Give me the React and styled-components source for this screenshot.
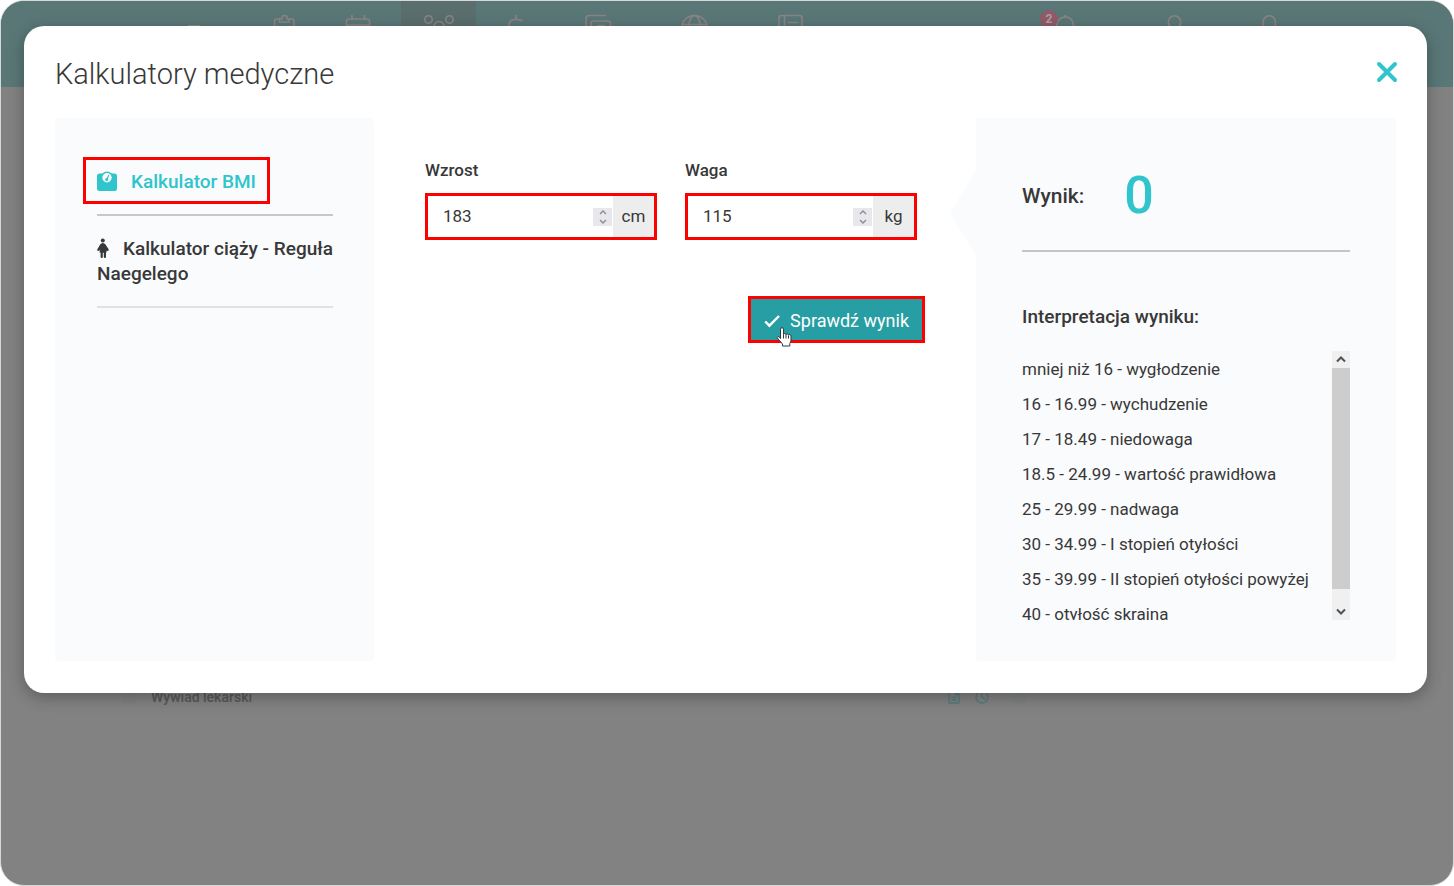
import React, { useState } from 'react'
import styled, { createGlobalStyle } from 'styled-components'

const navItems = [
  {
    name: 'Pacjenci',
    width: 62,
    icon: (
      <>
        <path d='M9 5H6.500Q4.500 5 4.500 7.500V28M19 5h3q2 0 2 2.500V28' />
        <path d='M9.500 3.800V8h9.500V5h-2V4a2.500 2.500 0 0 0-5 0v1H9.500z' />
      </>
    ),
  },
  {
    name: 'Terminarz',
    width: 86,
    icon: (
      <>
        <path d='M2.500 28V7.500q0-2.500 2.500-2.500h18q2.500 0 2.500 2.500v20' />
        <path d='M2.500 11h23M8 1.500v3.500M20.500 1.500v3.500' />
      </>
    ),
  },
  {
    name: 'Grupy',
    width: 75,
    active: true,
    icon: (
      <>
        <circle cx='3.500' cy='5.500' r='3.700' />
        <circle cx='24.500' cy='5.500' r='3.700' />
        <circle cx='14' cy='12.500' r='5' />
      </>
    ),
  },
  {
    name: 'Rozliczenia',
    width: 80,
    icon: <path d='M14 1.500v3.500M20 6.500q-6-2-10-.500-3 1.500-3 5v4' />,
  },
  {
    name: 'Dokumenty',
    width: 84,
    icon: (
      <>
        <path d='M2 24V5q0-3.500 3.500-3.500h16' />
        <path d='M7 28V9.500q0-2.500 2.500-2.500h14.500q2.500 0 2.500 2.500V28' />
        <path d='M14 11.500h6' />
      </>
    ),
  },
  {
    name: 'Portal',
    width: 108,
    icon: (
      <>
        <circle cx='14.500' cy='14.500' r='13' />
        <ellipse cx='14.500' cy='14.500' rx='6' ry='13' />
        <path d='M3 10.500h23' />
      </>
    ),
  },
  {
    name: 'Raporty',
    width: 84,
    icon: (
      <>
        <path d='M3 28V4q0-2.500 2.500-2.500h18q2.500 0 2.500 2.500v24M8.500 2v26' />
        <path d='M12.500 8.500h9' />
      </>
    ),
  },
]

const userItems = [
  {
    name: 'Powiadomienia',
    width: 120,
    badge: 2,
    icon: <path d='M6.500 14V11.500q1-8 8.500-8.500t8.500 8.500v2.500M15 1.500v1.500' />,
  },
  {
    name: 'Konto',
    width: 100,
    icon: <circle cx='14.500' cy='8' r='6.200' />,
  },
  {
    name: 'Wyloguj',
    width: 90,
    icon: <path d='M8 11.500V8a6.200 6.200 0 0 1 12.400 0V11.500' />,
  },
]

const results = [
  'mniej niż 16 - wygłodzenie',
  '16 - 16.99 - wychudzenie',
  '17 - 18.49 - niedowaga',
  '18.5 - 24.99 - wartość prawidłowa',
  '25 - 29.99 - nadwaga',
  '30 - 34.99 - I stopień otyłości',
  '35 - 39.99 - II stopień otyłości powyżej',
  '40 - otyłość skrajna',
]

const NavEntry = ({ item }) => (
  <NavItem href='#' aria-label={item.name} $width={item.width} $active={item.active}>
    <NavIcon viewBox='0 0 28 28'>{item.icon}</NavIcon>
    {item.badge && <Badge>{item.badge}</Badge>}
  </NavItem>
)

const NumberField = ({ id, label, unit, value, onChange }) => (
  <Field>
    <FieldLabel htmlFor={id}>{label}</FieldLabel>
    <InputGroup>
      <NumberInput id={id} type='number' value={value} onChange={(e) => onChange(e.target.value)} />
      <Stepper>
        <StepButton type='button' aria-label={`${label} +`} onClick={() => onChange(Number(value) + 1)}>
          <StepIcon viewBox='0 0 8 5'>
            <path d='M1 4l3-3 3 3' />
          </StepIcon>
        </StepButton>
        <StepButton type='button' aria-label={`${label} -`} onClick={() => onChange(Number(value) - 1)}>
          <StepIcon viewBox='0 0 8 5'>
            <path d='M1 1l3 3 3-3' />
          </StepIcon>
        </StepButton>
      </Stepper>
      <Unit>{unit}</Unit>
    </InputGroup>
  </Field>
)

const App = () => {
  const [height, setHeight] = useState(183)
  const [weight, setWeight] = useState(115)

  return (
    <Page>
      <GlobalStyle />
      <Shell>
        <Navbar>
          <Logo viewBox='0 0 14 14'>
            <path d='M1 1.500h12' />
          </Logo>
          {navItems.map((item) => (
            <NavEntry key={item.name} item={item} />
          ))}
          <Spacer />
          {userItems.map((item) => (
            <NavEntry key={item.name} item={item} />
          ))}
        </Navbar>
        <Record>
          <Tile />
          <RecordTitle>Wywiad lekarski</RecordTitle>
          <RecordActions>
            <RecordIcon viewBox='0 0 14 14'>
              <path d='M2 1h6.500L12 4.500V13H2zM8.500 1v3.500H12M4.500 7.500h5M4.500 10h5' />
            </RecordIcon>
            <RecordIcon viewBox='0 0 14 14'>
              <circle cx='7' cy='7' r='6' />
              <path d='M7 3v4l3 2.500' />
            </RecordIcon>
          </RecordActions>
          <Tile />
        </Record>
        <Overlay>
          <Modal role='dialog' aria-labelledby='modal-title'>
            <ModalHeader>
              <ModalTitle id='modal-title'>Kalkulatory medyczne</ModalTitle>
              <CloseButton type='button' aria-label='Zamknij'>
                <CloseIcon viewBox='0 0 22 22'>
                  <path d='M3 3l16 16M19 3L3 19' />
                </CloseIcon>
              </CloseButton>
            </ModalHeader>
            <Columns>
              <Sidebar>
                <MenuRow>
                  <MenuLink href='#' $active>
                    <MenuIcon width='20' height='20' viewBox='0 0 20 20'>
                      <rect y='2.500' width='20' height='17.500' rx='2.500' />
                      <circle cx='10' cy='7' r='6.500' />
                      <circle cx='10' cy='6.800' r='4.700' fill='#fafbfd' />
                      <circle cx='9.600' cy='8.600' r='1.500' />
                      <path d='M9.200 8.500l2.100-4.800 1 .4-1.600 5z' />
                    </MenuIcon>
                    Kalkulator BMI
                  </MenuLink>
                </MenuRow>
                <MenuRow>
                  <MenuLink href='#'>
                    <MenuIcon width='12' height='20' viewBox='0 0 12 20'>
                      <circle cx='5.800' cy='2.500' r='2' />
                      <path d='M5.800 5q1.900 0 2.700 1.500l2.800 4.200q.8 1.300 0 2-1 .7-1.800-.2V14.500H9V19q0 .9-1.100.9T6.800 19v-4.300h-1V19q0 .9-1.100.9T3.600 19v-4.500H2.500l.4-3-.7 1.100q-.7.8-1.500.2-.9-.6-.3-1.600L3.100 6.500Q4 5 5.800 5z' />
                    </MenuIcon>
                    Kalkulator ciąży - Reguła Naegelego
                  </MenuLink>
                </MenuRow>
              </Sidebar>
              <Form onSubmit={(e) => e.preventDefault()}>
                <Fields>
                  <NumberField id='height' label='Wzrost' unit='cm' value={height} onChange={setHeight} />
                  <NumberField id='weight' label='Waga' unit='kg' value={weight} onChange={setWeight} />
                </Fields>
                <SubmitButton type='submit'>
                  <CheckIcon viewBox='0 0 16 14'>
                    <path d='M1.200 7.500l4.200 4.200L15 2' />
                  </CheckIcon>
                  Sprawdź wynik
                  <Pointer viewBox='0 0 18 22'>
                    <path d='M5.500 12.500V3.200a1.500 1.500 0 0 1 3 0V8.500q0-1 1.200-1t1.300 1.200q.2-.8 1.300-.8t1.200 1.300q.2-.7 1.200-.7t1.300 1.500V14q0 2-1.200 3.500V20H7.500v-2L3 13q-1.500-2 0-2.500 1-.300 2.500 2z' />
                    <path d='M8.500 8.500v4M11 9v3.500M13.500 9.500v3' />
                  </Pointer>
                </SubmitButton>
              </Form>
              <ResultPanel>
                <ResultRow>
                  <ResultLabel>Wynik:</ResultLabel>
                  <ResultValue>0</ResultValue>
                </ResultRow>
                <SubTitle>Interpretacja wyniku:</SubTitle>
                <ScrollArea>
                  <ResultList>
                    {results.map((text) => (
                      <ResultItem key={text}>{text}</ResultItem>
                    ))}
                  </ResultList>
                  <Scrollbar aria-hidden='true'>
                    <ScrollArrow viewBox='0 0 10 7'>
                      <path d='M1 5.500l4-4 4 4' />
                    </ScrollArrow>
                    <Thumb />
                    <ScrollArrow viewBox='0 0 10 7'>
                      <path d='M1 1.500l4 4 4-4' />
                    </ScrollArrow>
                  </Scrollbar>
                </ScrollArea>
              </ResultPanel>
            </Columns>
          </Modal>
        </Overlay>
      </Shell>
    </Page>
  )
}

const GlobalStyle = createGlobalStyle`
  * {
    box-sizing: border-box;
  }
  body {
    margin: 0;
    background: #ffffff;
    color: #383838;
    font-family: Roboto, 'Liberation Sans', sans-serif;
    font-size: 16px;
  }
`
const Page = styled.div`
  display: flex;
  min-height: 100vh;
`
const Shell = styled.div`
  position: relative;
  flex: 1;
  overflow: hidden;
  border: 1px solid #d5d9d9;
  border-radius: 24px;
  background: #828282;
`
const Navbar = styled.nav`
  display: flex;
  height: 86px;
  padding: 0 139px 0 186px;
  background: #5a7777;
`
const Logo = styled.svg`
  width: 14px;
  height: 14px;
  margin: 23px 52px 0 0;
  fill: none;
  stroke: #8d8a8a;
  stroke-width: 1;
`
const Spacer = styled.div`
  flex: 1;
`
const NavItem = styled.a`
  position: relative;
  display: flex;
  justify-content: center;
  width: ${({ $width }) => $width}px;
  padding-top: 13px;
  background: ${({ $active }) => ($active ? '#5a6e6e' : 'transparent')};
`
const NavIcon = styled.svg`
  width: 28px;
  height: 28px;
  overflow: visible;
  fill: none;
  stroke: #8b8484;
  stroke-width: 1.6;
  stroke-linecap: round;
`
const Badge = styled.span`
  position: absolute;
  top: 9px;
  left: 36px;
  width: 18px;
  border-radius: 9px;
  background: #925a6a;
  color: #aaa0a2;
  font-size: 12px;
  font-weight: 700;
  line-height: 18px;
  text-align: center;
`
const Record = styled.div`
  display: flex;
  align-items: center;
  gap: 16px;
  margin-top: 600px;
  padding: 0 427px 0 121px;
`
const Tile = styled.span`
  width: 13px;
  height: 18px;
  background: #7f8080;
`
const RecordTitle = styled.span`
  flex: 1;
  color: #585858;
  font-size: 14px;
  font-weight: 500;
  line-height: 20px;
`
const RecordActions = styled.div`
  display: flex;
  gap: 14px;
  margin-right: 8px;
`
const RecordIcon = styled.svg`
  width: 14px;
  height: 14px;
  fill: none;
  stroke: #557b7d;
  stroke-width: 1.3;
`
const Overlay = styled.div`
  position: absolute;
  inset: 0;
  padding: 25px 26px 0 23px;
`
const Modal = styled.section`
  padding: 0 31px 32px;
  border-radius: 20px;
  background: #ffffff;
  box-shadow: 0 4px 16px rgba(0, 0, 0, 0.3);
`
const ModalHeader = styled.header`
  display: flex;
  align-items: center;
  justify-content: space-between;
  height: 92px;
`
const ModalTitle = styled.h1`
  margin: 0;
  padding-top: 4px;
  font-size: 29px;
  font-weight: 300;
  line-height: 40px;
`
const CloseButton = styled.button`
  display: flex;
  margin-right: -2px;
  padding: 0;
  border: 0;
  background: none;
  cursor: pointer;
`
const CloseIcon = styled.svg`
  width: 22px;
  height: 22px;
  fill: none;
  stroke: #30c5cc;
  stroke-width: 4;
  stroke-linecap: round;
`
const Columns = styled.div`
  display: grid;
  grid-template-columns: 319px minmax(0, 1fr) 420px;
  min-height: 543px;
`
const Sidebar = styled.ul`
  margin: 0;
  padding: 39px 41px 39px 42px;
  border-radius: 4px;
  background: #fafbfd;
  list-style: none;
`
const MenuRow = styled.li`
  padding-bottom: 10px;
  border-bottom: 2px solid #c6c8ca;
  & + & {
    padding: 20px 0;
    border-color: #dfe1e3;
  }
`
const MenuLink = styled.a`
  display: inline-block;
  margin: ${({ $active }) => ($active ? '0 -14px' : '0')};
  padding: ${({ $active }) => ($active ? '9px 11px 7px' : '0')};
  border: ${({ $active }) => ($active ? '3px solid #ff0000' : '0')};
  color: ${({ $active }) => ($active ? '#30c5cc' : '#383838')};
  font-size: 19px;
  font-weight: 500;
  line-height: 25px;
  text-decoration: none;
`
const MenuIcon = styled.svg`
  margin-right: 14px;
  fill: currentColor;
  vertical-align: -3px;
`
const Form = styled.form`
  display: flex;
  flex-direction: column;
  padding: 40px 51px;
`
const Fields = styled.div`
  display: flex;
  gap: 28px;
  padding-right: 8px;
`
const Field = styled.div`
  flex: 1;
  min-width: 0;
`
const FieldLabel = styled.label`
  display: block;
  margin-bottom: 11px;
  font-size: 17px;
  font-weight: 500;
  line-height: 24px;
`
const InputGroup = styled.div`
  display: flex;
  align-items: center;
  height: 47px;
  border: 3px solid #ff0000;
`
const NumberInput = styled.input`
  flex: 1;
  min-width: 0;
  height: 41px;
  padding: 0 0 2px 15px;
  border: 0;
  outline: 0;
  background: none;
  color: #383838;
  font-family: inherit;
  font-size: 17px;
  appearance: textfield;
  &::-webkit-inner-spin-button {
    appearance: none;
    margin: 0;
  }
`
const Stepper = styled.div`
  display: flex;
  flex-direction: column;
  margin-right: 1px;
`
const StepButton = styled.button`
  display: flex;
  align-items: center;
  justify-content: center;
  width: 19px;
  height: 9px;
  padding: 0;
  border: 0;
  background: #e7e7ec;
`
const StepIcon = styled.svg`
  width: 8px;
  height: 5px;
  fill: none;
  stroke: #8c8c94;
  stroke-width: 1.4;
`
const Unit = styled.span`
  width: 41px;
  background: #ededed;
  font-size: 17px;
  line-height: 41px;
  text-align: center;
`
const SubmitButton = styled.button`
  position: relative;
  display: flex;
  align-items: center;
  align-self: flex-end;
  gap: 10px;
  height: 47px;
  margin-top: 56px;
  padding: 2px 13px 0;
  border: 3px solid #ff0000;
  background: #279ea3;
  color: #ffffff;
  font-family: inherit;
  font-size: 18px;
  cursor: pointer;
`
const CheckIcon = styled.svg`
  width: 16px;
  height: 14px;
  fill: none;
  stroke: #ffffff;
  stroke-width: 2.4;
`
const Pointer = styled.svg`
  position: absolute;
  top: 27px;
  left: 24px;
  width: 18px;
  height: 22px;
  fill: #ffffff;
  stroke: #2c3a40;
  stroke-width: 1;
`
const ResultPanel = styled.section`
  position: relative;
  padding: 41px 46px;
  border-radius: 4px;
  background: #fafbfd;
  &::before {
    content: '';
    position: absolute;
    top: 52px;
    left: -26px;
    border: solid transparent;
    border-width: 43px 26px 43px 0;
    border-right-color: #fafbfd;
  }
`
const ResultRow = styled.div`
  display: flex;
  align-items: center;
  gap: 40px;
  height: 93px;
  padding-bottom: 18px;
  border-bottom: 2px solid #c4c5c6;
`
const ResultLabel = styled.span`
  font-size: 21px;
  font-weight: 500;
`
const ResultValue = styled.output`
  color: #30c5cc;
  font-size: 52px;
  font-weight: 500;
  line-height: 60px;
`
const SubTitle = styled.h2`
  margin: 53px 0 22px;
  font-size: 19px;
  font-weight: 500;
  line-height: 24px;
`
const ScrollArea = styled.div`
  display: flex;
  height: 269px;
`
const ResultList = styled.ul`
  flex: 1;
  min-width: 0;
  margin: 0;
  padding: 1px 0 0;
  overflow-y: auto;
  scrollbar-width: none;
  list-style: none;
`
const ResultItem = styled.li`
  font-size: 17px;
  line-height: 35px;
  white-space: nowrap;
`
const Scrollbar = styled.div`
  display: flex;
  flex-direction: column;
  align-items: center;
  width: 18px;
  background: #f0f0f1;
`
const ScrollArrow = styled.svg`
  width: 10px;
  height: 7px;
  margin: 5px 0;
  fill: none;
  stroke: #505050;
  stroke-width: 2;
`
const Thumb = styled.div`
  width: 100%;
  height: 221px;
  margin-bottom: 14px;
  background: #cdcdcd;
`

export default App
